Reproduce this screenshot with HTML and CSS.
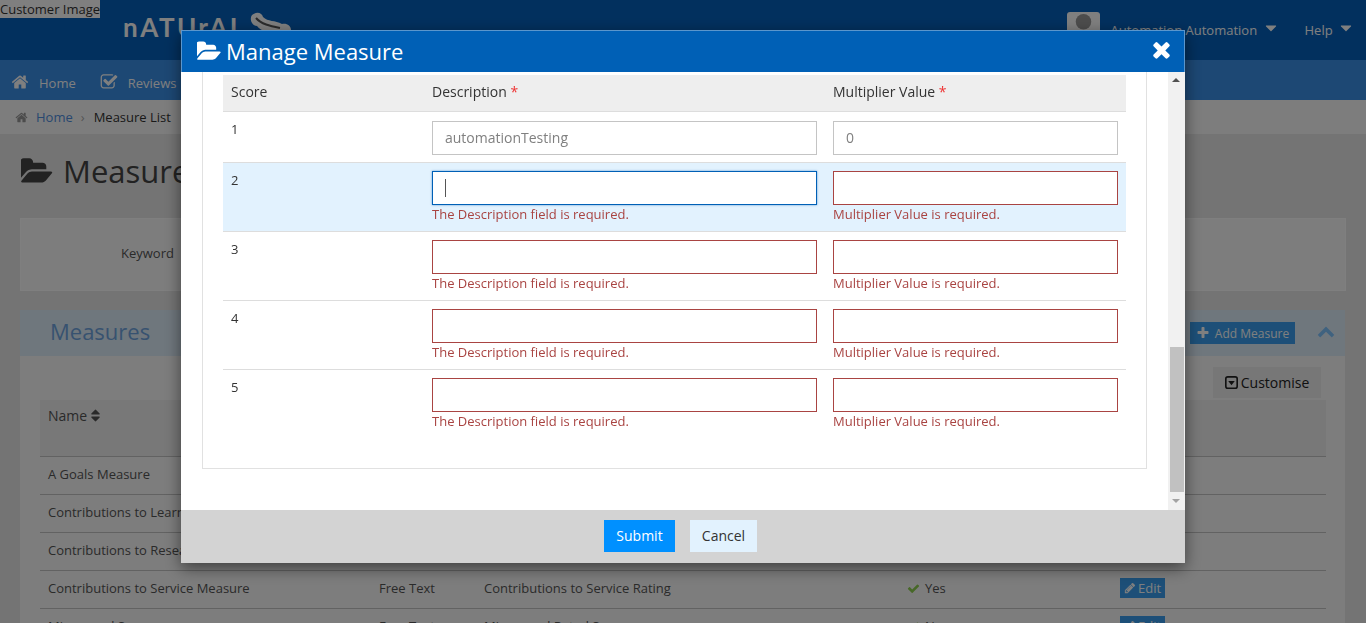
FILE: index.html
```html
<!DOCTYPE html>
<html lang="en">
<head>
   <meta charset="UTF-8" />
   <meta name="viewport" content="width=device-width, initial-scale=1.0"/>
   <title>Manage Measure</title>
   <link rel="stylesheet" href="styles.css">
</head>
<body>

   <svg class="sprite" xmlns="http://www.w3.org/2000/svg">
      <symbol id="i-folder" viewBox="0 0 1920 1792"><path d="M1815 952q0 31-31 66l-336 396q-43 51-120.5 86.5t-143.5 35.5h-1088q-34 0-60.5-13t-26.5-43q0-31 31-66l336-396q43-51 120.5-86.5t143.5-35.5h1088q34 0 60.5 13t26.5 43zm-343-344v160h-832q-94 0-197 47.5t-164 119.5l-337 396-5 6q0-4-.5-12.5t-.5-12.5v-960q0-92 66-158t158-66h320q92 0 158 66t66 158v32h544q92 0 158 66t66 158z"/></symbol>
      <symbol id="i-home" viewBox="0 0 1792 1792"><path d="M1472 992v480q0 26-19 45t-45 19h-384v-384h-256v384h-384q-26 0-45-19t-19-45v-480q0-1 .5-3t.5-3l575-474 575 474q1 2 1 6zm223-69l-62 74q-8 9-21 11h-3q-13 0-21-7l-692-577-692 577q-12 8-24 7-13-2-21-11l-62-74q-8-10-7-23.5t11-21.5l719-599q32-26 76-26t76 26l244 204v-195q0-14 9-23t23-9h192q14 0 23 9t9 23v408l219 182q10 8 11 21.5t-7 23.5z"/></symbol>
      <symbol id="i-check-square" viewBox="0 0 1792 1792"><path d="M1472 930v318q0 119-84.5 203.5t-203.5 84.5h-832q-119 0-203.5-84.5t-84.5-203.5v-832q0-119 84.5-203.5t203.5-84.5h832q63 0 117 25 15 7 18 23 3 17-9 29l-49 49q-10 10-23 10-3 0-9-2-23-6-45-6h-832q-66 0-113 47t-47 113v832q0 66 47 113t113 47h832q66 0 113-47t47-113v-254q0-13 9-22l64-64q10-10 23-10 6 0 12 3 20 8 20 29zm231-489l-814 814q-24 24-57 24t-57-24l-430-430q-24-24-24-57t24-57l110-110q24-24 57-24t57 24l263 263 647-647q24-24 57-24t57 24l110 110q24 24 24 57t-24 57z"/></symbol>
      <symbol id="i-times" viewBox="0 0 1792 1792"><path d="M1490 1322q0 40-28 68l-136 136q-28 28-68 28t-68-28l-294-294-294 294q-28 28-68 28t-68-28l-136-136q-28-28-28-68t28-68l294-294-294-294q-28-28-28-68t28-68l136-136q28-28 68-28t68 28l294 294 294-294q28-28 68-28t68 28l136 136q28 28 28 68t-28 68l-294 294 294 294q28 28 28 68z"/></symbol>
      <symbol id="i-caret" viewBox="0 0 1792 1792"><path d="M1408 704q0 26-19 45l-448 448q-19 19-45 19t-45-19l-448-448q-19-19-19-45t19-45 45-19h896q26 0 45 19t19 45z"/></symbol>
      <symbol id="i-plus" viewBox="0 0 1792 1792"><path d="M1600 736v192q0 40-28 68t-68 28h-416v416q0 40-28 68t-68 28h-192q-40 0-68-28t-28-68v-416h-416q-40 0-68-28t-28-68v-192q0-40 28-68t68-28h416v-416q0-40 28-68t68-28h192q40 0 68 28t28 68v416h416q40 0 68 28t28 68z"/></symbol>
      <symbol id="i-chevron" viewBox="0 0 1792 1792"><path d="M1683 1331l-166 165q-19 19-45 19t-45-19l-531-531-531 531q-19 19-45 19t-45-19l-166-165q-19-19-19-45.5t19-45.5l742-741q19-19 45-19t45 19l742 741q19 19 19 45.5t-19 45.5z"/></symbol>
      <symbol id="i-pencil" viewBox="0 0 1792 1792"><path d="M491 1536l91-91-235-235-91 91v107h128v128h107zm523-928q0-22-22-22-10 0-17 7l-542 542q-7 7-7 17 0 22 22 22 10 0 17-7l542-542q7-7 7-17zm-54-192l416 416-832 832h-416v-416zm683 96q0 53-37 90l-166 166-416-416 166-165q36-38 90-38 53 0 91 38l235 234q37 39 37 91z"/></symbol>
      <symbol id="i-check" viewBox="0 0 1792 1792"><path d="M1671 566q0 40-28 68l-724 724-136 136q-28 28-68 28t-68-28l-136-136-362-362q-28-28-28-68t28-68l136-136q28-28 68-28t68 28l294 295 656-657q28-28 68-28t68 28l136 136q28 28 28 68z"/></symbol>
      <symbol id="i-sort" viewBox="0 0 1792 1792"><path d="M1408 1088q0 26-19 45l-448 448q-19 19-45 19t-45-19l-448-448q-19-19-19-45t19-45 45-19h896q26 0 45 19t19 45zm0-384q0 26-19 45t-45 19h-896q-26 0-45-19t-19-45 19-45l448-448q19-19 45-19t45 19l448 448q19 19 19 45z"/></symbol>
      <symbol id="i-caret-square" viewBox="0 0 16 16"><rect x="1" y="1" width="14" height="14" rx="2.5" fill="none" stroke="currentColor" stroke-width="2"/><path d="M4 6h8l-4 5.5z"/></symbol>
   </svg>

   <div class="page">
      <header class="topbar">
         <span class="customer-image">Customer Image</span>
         <div class="logo">
            <span class="logo-text">nATUrAL</span>
            <svg class="logo-bone" viewBox="0 0 46 30"><path d="M4 3c5-4 10-2 11 2 5 5 12 3 19 7 5-1 9 2 9 6s-3 7-7 6c-4 3-9 0-12-3-6-2-11-2-15-7C4 14 1 7 4 3z"/><path class="logo-bone-mark" d="M8 6c5 6 14 8 24 10" /></svg>
         </div>
         <div class="topbar-right">
            <span class="avatar">
               <svg viewBox="0 0 34 34"><circle cx="17" cy="10" r="8"/><path d="M2 34c0-11 6-15 15-15s15 4 15 15z"/></svg>
            </span>
            <span class="top-link user-name">Automation Automation <svg class="icon caret"><use href="#i-caret"/></svg></span>
            <span class="top-link">Help <svg class="icon caret"><use href="#i-caret"/></svg></span>
         </div>
      </header>

      <nav class="mainnav">
         <a class="nav-item"><svg class="icon"><use href="#i-home"/></svg>Home</a>
         <a class="nav-item"><svg class="icon"><use href="#i-check-square"/></svg>Reviews</a>
      </nav>

      <div class="breadcrumb">
         <svg class="icon"><use href="#i-home"/></svg>
         <a class="crumb-link">Home</a>
         <span class="crumb-sep">&rsaquo;</span>
         <span>Measure List</span>
      </div>

      <main class="content">
         <h1 class="page-title"><svg class="icon"><use href="#i-folder"/></svg>Measures</h1>

         <section class="search-panel">
            <label class="search-label">Keyword</label>
         </section>

         <section class="panel">
            <div class="panel-head">
               <h2>Measures</h2>
               <button class="btn-add"><svg class="icon"><use href="#i-plus"/></svg>Add Measure</button>
               <svg class="icon panel-toggle"><use href="#i-chevron"/></svg>
            </div>
            <div class="panel-body">
               <div class="panel-tools">
                  <button class="btn-customise"><svg class="icon"><use href="#i-caret-square"/></svg>Customise</button>
               </div>
               <table class="list">
                  <colgroup>
                     <col class="col-name"><col class="col-type"><col class="col-rating"><col class="col-active"><col>
                  </colgroup>
                  <thead>
                     <tr><th>Name<svg class="icon"><use href="#i-sort"/></svg></th><th></th><th></th><th></th><th></th></tr>
                  </thead>
                  <tbody>
                     <tr><td>A Goals Measure</td><td></td><td></td><td></td><td></td></tr>
                     <tr><td>Contributions to Learning Measure</td><td></td><td></td><td></td><td></td></tr>
                     <tr><td>Contributions to Research Measure</td><td></td><td></td><td></td><td></td></tr>
                     <tr><td>Contributions to Service Measure</td><td>Free Text</td><td>Contributions to Service Rating</td><td><svg class="icon tick"><use href="#i-check"/></svg>Yes</td><td><a class="btn-edit"><svg class="icon"><use href="#i-pencil"/></svg>Edit</a></td></tr>
                     <tr><td>Mis-owned Score</td><td>Free Text</td><td>Mis-owned Rated Score</td><td><svg class="icon tick"><use href="#i-check"/></svg>No</td><td><a class="btn-edit"><svg class="icon"><use href="#i-pencil"/></svg>Edit</a></td></tr>
                  </tbody>
               </table>
            </div>
         </section>
      </main>
   </div>

   <div class="overlay">
      <div class="modal">
         <div class="modal-head">
            <svg class="icon"><use href="#i-folder"/></svg>
            <h3>Manage Measure</h3>
            <svg class="icon modal-close"><use href="#i-times"/></svg>
         </div>
         <div class="modal-body">
            <div class="modal-scroll">
               <div class="fieldset">
                  <table class="scores">
                     <colgroup><col class="col-score"><col class="col-desc"><col></colgroup>
                     <thead>
                        <tr><th>Score</th><th>Description <span class="req">*</span></th><th>Multiplier Value <span class="req">*</span></th></tr>
                     </thead>
                     <tbody>
                        <tr class="first">
                           <td>1</td>
                           <td><input class="field field-desc" type="text" value="automationTesting"></td>
                           <td><input class="field field-mult" type="text" value="0"></td>
                        </tr>
                        <tr class="active">
                           <td>2</td>
                           <td>
                              <div class="field-wrap">
                                 <input class="field field-desc field-focus" type="text">
                                 <span class="text-caret"></span>
                              </div>
                              <p class="error">The Description field is required.</p>
                           </td>
                           <td><input class="field field-mult invalid" type="text"><p class="error">Multiplier Value is required.</p></td>
                        </tr>
                        <tr>
                           <td>3</td>
                           <td><input class="field field-desc invalid" type="text"><p class="error">The Description field is required.</p></td>
                           <td><input class="field field-mult invalid" type="text"><p class="error">Multiplier Value is required.</p></td>
                        </tr>
                        <tr>
                           <td>4</td>
                           <td><input class="field field-desc invalid" type="text"><p class="error">The Description field is required.</p></td>
                           <td><input class="field field-mult invalid" type="text"><p class="error">Multiplier Value is required.</p></td>
                        </tr>
                        <tr class="last">
                           <td>5</td>
                           <td><input class="field field-desc invalid" type="text"><p class="error">The Description field is required.</p></td>
                           <td><input class="field field-mult invalid" type="text"><p class="error">Multiplier Value is required.</p></td>
                        </tr>
                     </tbody>
                  </table>
               </div>
            </div>
            <div class="scrollbar">
               <span class="arrow arrow-up"></span>
               <div class="track"><div class="thumb"></div></div>
               <span class="arrow arrow-down"></span>
            </div>
         </div>
         <div class="modal-foot">
            <button class="btn-submit">Submit</button>
            <button class="btn-cancel">Cancel</button>
         </div>
      </div>
   </div>

</body>
</html>
```

FILE: styles.css
```css
* {
   margin: 0;
   padding: 0;
   box-sizing: border-box;
}
html, body {
   height: 100%;
   overflow: hidden;
}
body {
   font-family: "Open Sans", Arial, sans-serif;
   font-size: 13px;
   color: #555;
   background: #e8e8e8;
}
.sprite {
   display: none;
}
.icon {
   width: 1em;
   height: 1em;
   fill: currentColor;
   flex: none;
}

/* page behind the dialog */
.page {
   height: 623px;
   overflow: hidden;
}
.topbar {
   height: 60px;
   background: #0561bd;
   display: flex;
   align-items: flex-start;
}
.customer-image {
   width: 100px;
   height: 18px;
   line-height: 18px;
   background: #fff;
   color: #333;
   white-space: nowrap;
}
.logo {
   margin: 9px 0 0 23px;
   display: flex;
   align-items: flex-start;
}
.logo-text {
   width: 125px;
   font-family: Lato, sans-serif;
   font-size: 26px;
   font-weight: 700;
   line-height: 36px;
   letter-spacing: 2.5px;
   color: #fff;
}
.logo-bone {
   width: 46px;
   height: 30px;
   margin-top: 3px;
   fill: #fff;
}
.logo-bone-mark {
   fill: none;
   stroke: #555;
   stroke-width: 2;
}
.topbar-right {
   margin-left: auto;
   display: flex;
   align-items: flex-start;
   padding: 12px 11px 0 0;
}
.avatar {
   width: 33px;
   height: 33px;
   background: #fff;
   border-radius: 3px;
   margin-right: 11px;
   overflow: hidden;
}
.avatar svg {
   display: block;
   width: 100%;
   height: 100%;
   fill: #999;
}
.top-link {
   color: #fff;
   font-size: 13px;
   line-height: 36px;
   height: 36px;
}
.top-link .caret {
   width: 18px;
   height: 18px;
   margin-left: 1px;
   vertical-align: -2px;
}
.user-name {
   margin-right: 25px;
}
.mainnav {
   height: 40px;
   background: #3a90e8;
   display: flex;
   padding: 6px 0 0 11px;
}
.nav-item {
   display: flex;
   align-items: center;
   color: #fff;
   font-size: 13px;
   margin-right: 24px;
}
.nav-item .icon {
   font-size: 18px;
   margin-right: 10px;
   margin-top: -3px;
}
.breadcrumb {
   height: 34px;
   background: #fbfbfb;
   display: flex;
   align-items: center;
   padding-left: 15px;
   color: #333;
}
.breadcrumb .icon {
   font-size: 13px;
   color: #999;
   margin-right: 8px;
}
.crumb-link {
   color: #4f8fe0;
}
.crumb-sep {
   margin: 0 9px 0 8px;
   color: #aaa;
}
.content {
   padding: 0 20px;
}
.page-title {
   height: 84px;
   display: flex;
   align-items: center;
   font-size: 31px;
   font-weight: 400;
   color: #444;
   padding: 0 0 10px 1px;
}
.page-title .icon {
   font-size: 33px;
   margin-right: 9px;
}
.search-panel {
   height: 73px;
   background: #fbfbfb;
   border: 1px solid #fff;
   display: flex;
   align-items: center;
   padding: 0 0 4px 100px;
}
.panel {
   margin-top: 19px;
   width: 1325px;
   background: #fbfbfb;
}
.panel-head {
   height: 46px;
   background: #dfeefb;
   display: flex;
   align-items: center;
   padding: 0 10px 4px 30px;
}
.panel-head h2 {
   font-size: 22px;
   font-weight: 400;
   color: #6fa5e0;
}
.btn-add {
   margin-left: auto;
   margin-top: 4px;
   height: 22px;
   width: 105px;
   border: 0;
   background: #3a9ff0;
   color: #fff;
   font: 12px "Open Sans", Arial, sans-serif;
   display: flex;
   align-items: center;
   justify-content: center;
}
.btn-add .icon {
   font-size: 14px;
   margin-right: 5px;
}
.panel-toggle {
   font-size: 18px;
   color: #7fc4ff;
   margin-left: 22px;
}
.panel-body {
   padding: 11px 19px 0 20px;
}
.panel-tools {
   display: flex;
   justify-content: flex-end;
   padding-right: 5px;
   height: 33px;
}
.btn-customise {
   width: 108px;
   height: 31px;
   border: 0;
   background: #eee;
   color: #222;
   font: 14px "Open Sans", Arial, sans-serif;
   display: flex;
   align-items: center;
   justify-content: center;
}
.btn-customise .icon {
   font-size: 13px;
   margin-right: 3px;
}
.list {
   width: 1286px;
   border-collapse: collapse;
   table-layout: fixed;
}
.col-name { width: 331px; }
.col-type { width: 105px; }
.col-rating { width: 423px; }
.col-active { width: 213px; }
.list th {
   height: 56px;
   background: #f0f0f0;
   text-align: left;
   vertical-align: top;
   font-weight: 400;
   font-size: 14px;
   padding: 6px 8px;
}
.list th .icon {
   font-size: 15px;
   margin-left: 1px;
   vertical-align: -2px;
}
.list td {
   height: 38px;
   border-top: 1px solid #c4c4c4;
   padding: 0 8px 3px;
   white-space: nowrap;
}
.tick {
   color: #8fd050;
   margin-right: 5px;
   vertical-align: -2px;
}
.btn-edit {
   display: inline-flex;
   align-items: center;
   justify-content: center;
   width: 45px;
   height: 20px;
   background: #3a9ff0;
   color: #fff;
   vertical-align: middle;
}
.btn-edit .icon {
   margin-right: 2px;
   font-size: 12px;
}

/* dialog */
.overlay {
   position: fixed;
   inset: 0;
   background: rgba(0, 0, 0, 0.5);
}
.modal {
   width: 1004px;
   height: 533px;
   margin: 30px auto 0;
   background: #fff;
   display: flex;
   flex-direction: column;
   color: #333;
   box-shadow: 0 5px 15px rgba(0, 0, 0, 0.5);
}
.modal-head {
   height: 42px;
   background: #0060b6;
   border: 1px solid #5b96cc;
   border-bottom: 0;
   color: #fff;
   display: flex;
   align-items: center;
   padding: 0 15px;
}
.modal-head .icon {
   font-size: 25px;
}
.modal-head h3 {
   font-size: 22px;
   font-weight: 400;
   margin: -2px 0 0 4px;
}
.modal-close {
   margin-left: auto;
   margin-top: -4px;
   margin-right: -5px;
}
.modal-body {
   flex: 1;
   display: flex;
   min-height: 0;
}
.modal-scroll {
   flex: 1;
   overflow: hidden;
   padding: 0 21px 0 21px;
}
.fieldset {
   width: 945px;
   height: 397px;
   border: 1px solid #e1e1e1;
   border-top: 0;
   padding: 3px 20px 0;
}
.scores {
   width: 903px;
   border-collapse: collapse;
   table-layout: fixed;
   font-size: 14px;
}
.col-score { width: 201px; }
.col-desc { width: 401px; }
.scores th {
   height: 36px;
   background: #eee;
   font-weight: 400;
   text-align: left;
   padding: 0 8px 3px;
   border-bottom: 1px solid #ddd;
}
.req {
   color: #e33;
}
.scores td {
   height: 69px;
   vertical-align: top;
   padding: 8px;
   border-bottom: 1px solid #ddd;
   font-size: 13px;
}
.scores .first td {
   height: 51px;
   padding: 9px 8px 0;
}
.scores .first td:first-child {
   padding-top: 8px;
}
.scores .active td {
   background: #e2f2fe;
}
.scores .last td {
   border-bottom: 0;
}
.field {
   display: block;
   height: 34px;
   border: 1px solid #c4c4c4;
   border-radius: 0;
   background: #fff;
   padding: 0 12px;
   font: 14px "Open Sans", Arial, sans-serif;
   color: #808080;
   outline: 0;
}
.field-desc {
   width: 385px;
}
.field-mult {
   width: 285px;
}
.invalid {
   border-color: #a94442;
}
.field-focus {
   border-color: #0060b6;
   box-shadow: 0 0 2px rgba(0, 96, 182, 0.6);
}
.field-wrap {
   position: relative;
}
.text-caret {
   position: absolute;
   left: 13px;
   top: 8px;
   width: 1px;
   height: 18px;
   background: #555;
}
.error {
   color: #a94442;
   font-size: 13px;
   line-height: 18px;
}
.scrollbar {
   width: 17px;
   margin-left: -1px;
   background: #f1f1f1;
   display: flex;
   flex-direction: column;
}
.arrow {
   height: 17px;
   flex: none;
   position: relative;
}
.arrow::after {
   content: "";
   position: absolute;
   left: 4px;
   top: 6px;
   border: 4px solid transparent;
   border-top: 0;
   border-bottom: 4px solid #505050;
}
.arrow-down::after {
   border-bottom: 0;
   border-top: 4px solid #a3a3a3;
}
.track {
   flex: 1;
   display: flex;
   flex-direction: column;
   justify-content: flex-end;
}
.thumb {
   height: 145px;
   background: #c1c1c1;
   margin: 0 1px 1px 2px;
}
.modal-foot {
   height: 53px;
   background: #d3d3d3;
   display: flex;
   justify-content: center;
   align-items: center;
   gap: 15px;
   padding: 0 5px 2px 0;
}
.modal-foot button {
   height: 32px;
   border: 0;
   font: 14px "Open Sans", Arial, sans-serif;
}
.btn-submit {
   width: 71px;
   background: #0090ff;
   color: #fff;
}
.btn-cancel {
   width: 67px;
   background: #e2f2fe;
   color: #333;
}
```
